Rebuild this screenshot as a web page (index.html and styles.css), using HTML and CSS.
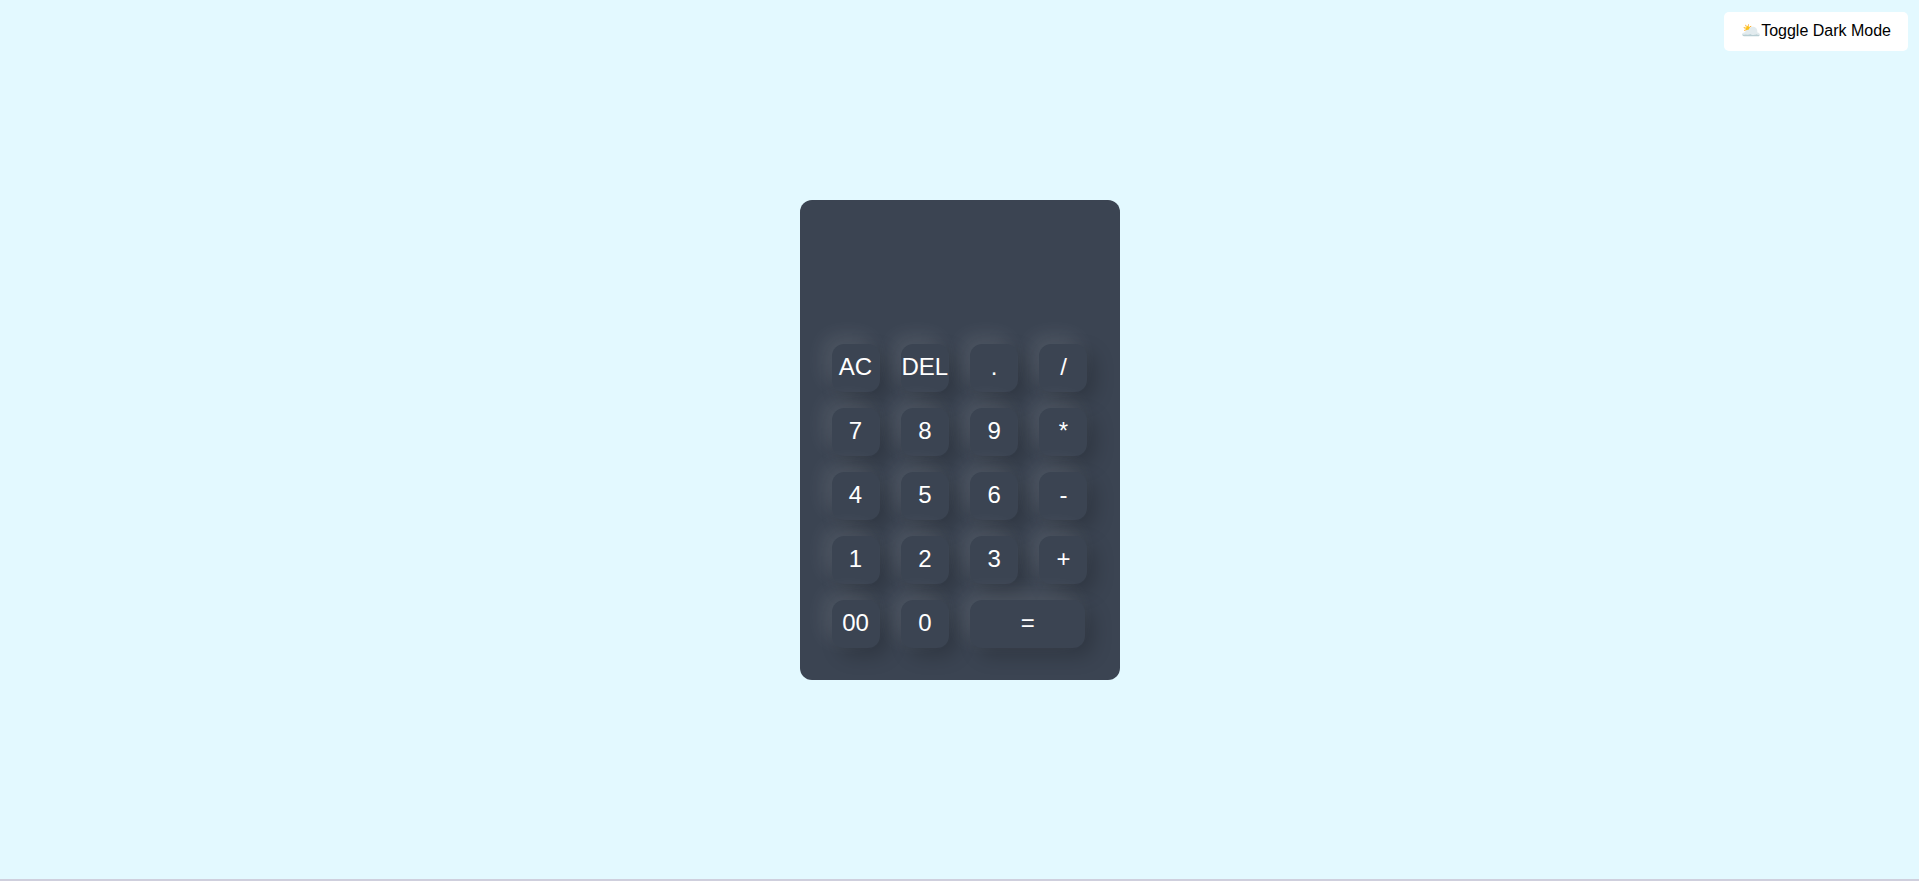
FILE: index.html
```html
<!DOCTYPE html>
<html lang="en">
<head>
    <meta charset="UTF-8">
    <meta name="viewport" content="width=device-width, initial-scale=1.0">
    <title>Calculator</title>
    <link rel="stylesheet" href="styles.css">
</head>
<body>
    <div class="container">
        <button type="button" class="toggle" id="toggle">🌥️Toggle Dark Mode</button>
        <form class="calculator">
            <input type="text" class="display" name="display" aria-label="Result" readonly>
            <div class="keys">
                <button type="button" data-action="clear">AC</button>
                <button type="button" data-action="delete">DEL</button>
                <button type="button">.</button>
                <button type="button">/</button>
                <button type="button">7</button>
                <button type="button">8</button>
                <button type="button">9</button>
                <button type="button">*</button>
                <button type="button">4</button>
                <button type="button">5</button>
                <button type="button">6</button>
                <button type="button">-</button>
                <button type="button">1</button>
                <button type="button">2</button>
                <button type="button">3</button>
                <button type="button">+</button>
                <button type="button">00</button>
                <button type="button">0</button>
                <button type="button" class="equal" data-action="equal">=</button>
            </div>
        </form>
    </div>

    <script>
        const display = document.querySelector('.display');

        document.getElementById('toggle').addEventListener('click', function() {
            document.body.classList.toggle('dark');
        });

        document.querySelectorAll('.keys button').forEach(function(key) {
            key.addEventListener('click', function() {
                if (key.dataset.action === 'clear') {
                    display.value = '';
                } else if (key.dataset.action === 'delete') {
                    display.value = display.value.slice(0, -1);
                } else if (key.dataset.action === 'equal') {
                    try {
                        display.value = eval(display.value) ?? '';
                    } catch (error) {
                        display.value = 'Error';
                    }
                } else {
                    display.value += key.textContent;
                }
            });
        });
    </script>
</body>
</html>
```

FILE: styles.css
```css
* {
    margin: 0;
    padding: 0;
    box-sizing: border-box;
    font-family: "Liberation Sans", Arial, sans-serif;
}

body {
    background-color: #e3f9ff;
}

body.dark {
    background-color: #15191f;
}

.container {
    display: grid;
    grid-template-rows: 1fr auto 1fr;
    justify-items: center;
    min-height: 100vh;
    border-bottom: 2px solid #cfcfdd;
}

.toggle {
    justify-self: end;
    align-self: start;
    margin: 12px 11px;
    padding: 9px 17px 11px;
    border: none;
    border-radius: 5px;
    background-color: #fff;
    color: #000;
    font-size: 16px;
    cursor: pointer;
}

.calculator {
    width: 320px;
    padding: 32px;
    border-radius: 12px;
    background-color: #3b4452;
}

.display {
    display: block;
    width: 100%;
    height: 80px;
    margin-bottom: 32px;
    border: none;
    outline: none;
    background: transparent;
    color: #fff;
    font-size: 40px;
    text-align: right;
}

.keys {
    display: grid;
    grid-template-columns: repeat(4, 48px);
    justify-content: space-between;
    row-gap: 16px;
}

.keys button {
    height: 48px;
    padding-bottom: 2px;
    border: none;
    border-radius: 12px;
    background-color: #3b4452;
    box-shadow: -8px -8px 20px rgba(255, 255, 255, 0.1), 8px 8px 20px rgba(0, 0, 0, 0.2);
    color: #fff;
    font-size: 24px;
    cursor: pointer;
}

.keys .equal {
    grid-column: span 2;
    width: 115px;
}
```
